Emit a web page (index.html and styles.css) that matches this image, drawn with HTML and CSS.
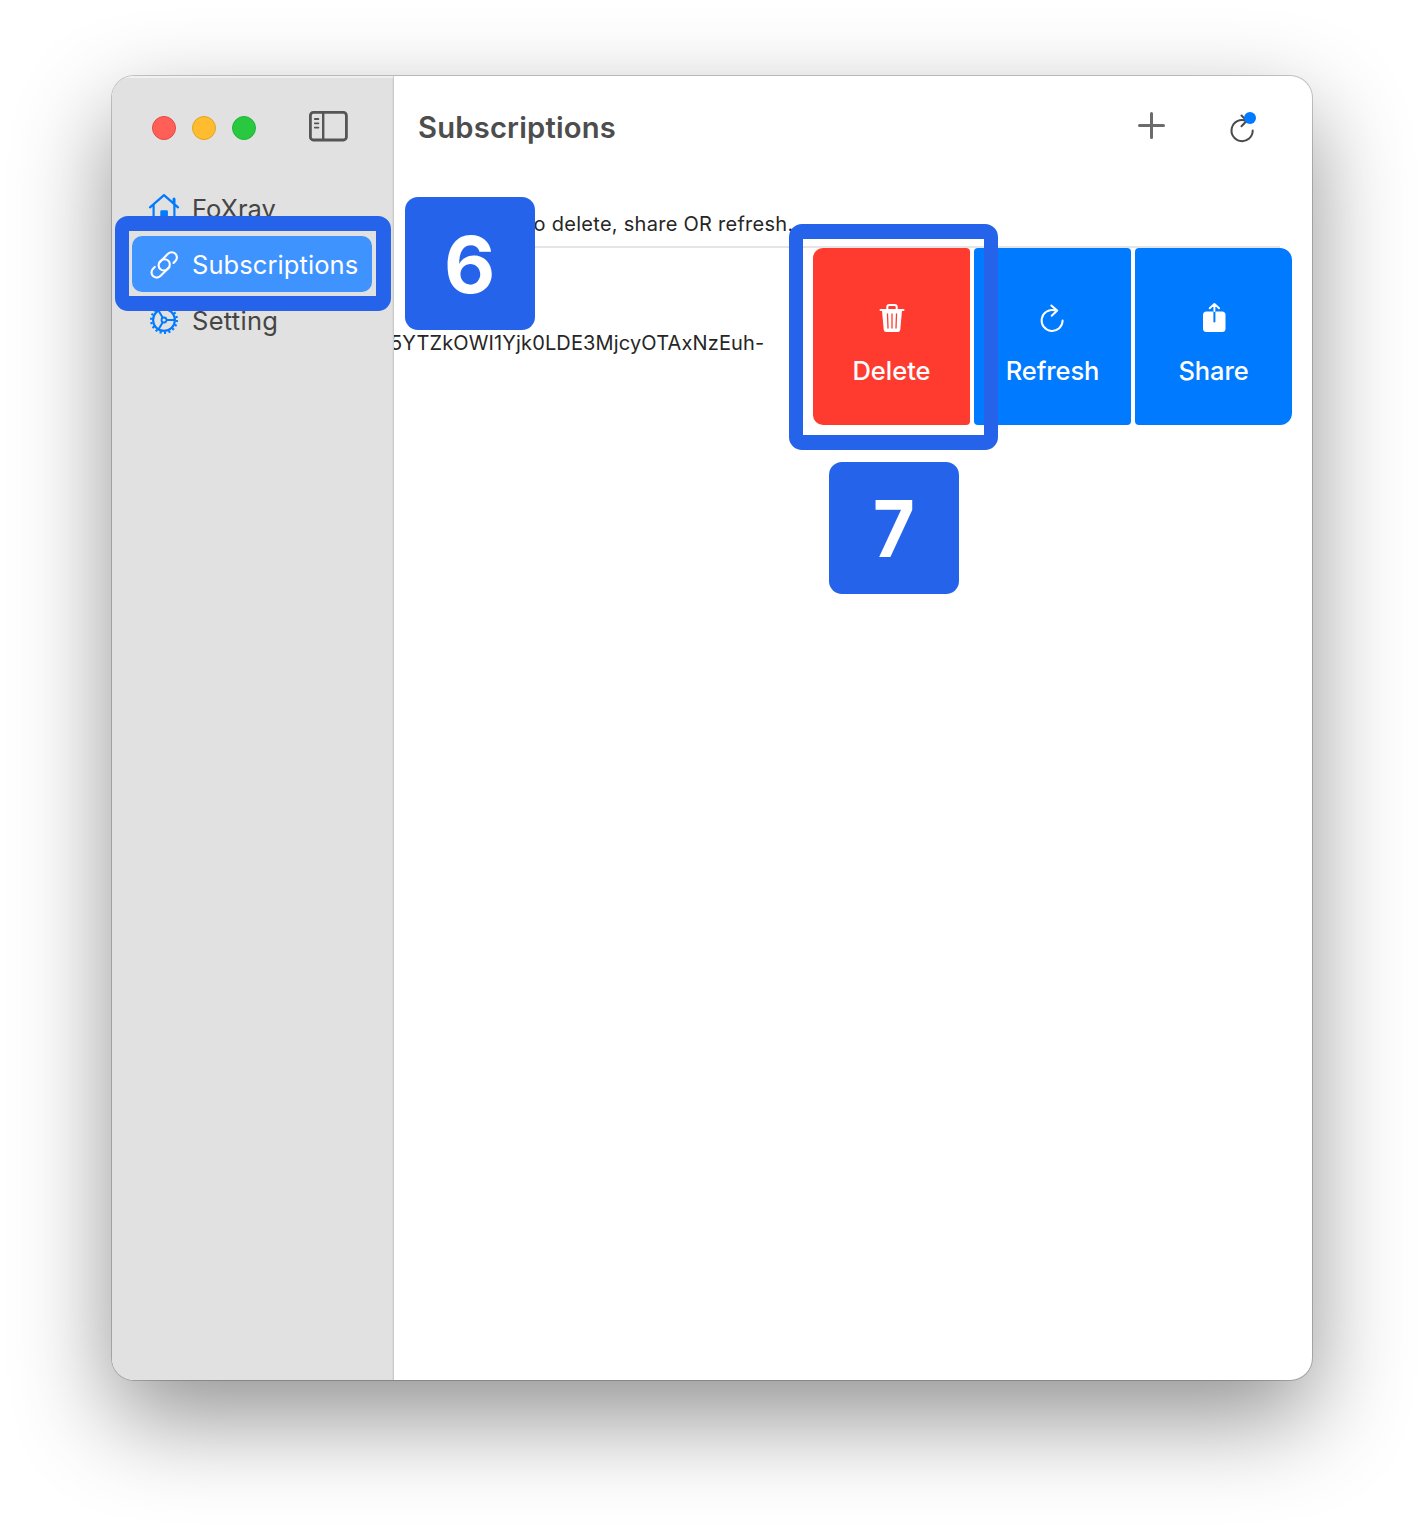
FILE: index.html
```html
<!DOCTYPE html>
<html lang="en">
<head>
<meta charset="utf-8">
<title>Subscriptions</title>
<link rel="stylesheet" href="styles.css">
</head>
<body>
<main class="stage">
  <div class="window">
    <aside class="sidebar">
      <div class="titlebar">
        <span class="light light-close"></span>
        <span class="light light-min"></span>
        <span class="light light-zoom"></span>
        <svg class="toggle" width="40" height="32" viewBox="0 0 40 32" fill="none" stroke="#555" stroke-width="2.8">
          <rect x="2.4" y="2.4" width="36" height="27.6" rx="3"/>
          <path d="M15.2 2.4V30" stroke-width="2.4"/>
          <path d="M6.8 9h3.6M6.8 13.3h3.6M6.8 17.6h3.6" stroke-width="1.8" stroke-linecap="round"/>
        </svg>
      </div>
      <nav class="nav">
        <a class="item">
          <svg class="icon" width="32" height="32" viewBox="0 0 32 32" fill="none" stroke="#007aff" stroke-width="2.2" stroke-linecap="round" stroke-linejoin="round">
            <path d="M2 15.4 16 3.2 30 15.4M5.6 13v15.4h20.8V13"/>
            <path d="M26 11V7" stroke-width="3"/>
            <path d="M13.4 27.5V19.4h5.4v8.1z" fill="#007aff"/>
          </svg>
          <span class="label label-home">FoXray</span>
        </a>
        <a class="item active">
          <svg class="icon" width="32" height="32" viewBox="0 0 32 32" fill="none" stroke="#fff" stroke-width="2.1" stroke-linecap="round">
            <g transform="translate(16.2 16.9) rotate(-45)">
              <path d="M8 5.200H10.600A5.200 5.200 0 0 0 10.600 -5.200H-.6A5.200 5.200 0 0 0 -.6 5.200H2"/>
              <path d="M-8 -5.200H-10.600A5.200 5.200 0 0 0 -10.600 5.200H.6A5.200 5.200 0 0 0 .6 -5.200H-2"/>
            </g>
          </svg>
          <span class="label label-subs">Subscriptions</span>
        </a>
        <a class="item">
          <svg class="icon" width="32" height="32" viewBox="0 0 32 32" fill="none" stroke="#007aff">
            <circle cx="16" cy="16" r="10.9" stroke-width="2.2"/>
            <circle cx="16" cy="16" r="12.9" stroke-width="2.2" stroke-dasharray="2.1 2.403"/>
            <circle cx="16" cy="16" r="2.5" stroke-width="1.8"/>
            <path d="M18.500 16H27M14.700 13.800 10.500 6.600M14.700 18.200 10.500 25.400" stroke-width="2"/>
          </svg>
          <span class="label label-set">Setting</span>
        </a>
      </nav>
    </aside>
    <section class="content">
      <header class="toolbar">
        <h1 class="title">Subscriptions</h1>
        <svg class="add" width="30" height="30" viewBox="0 0 30 30" fill="none" stroke="#6b6b6b" stroke-width="3" stroke-linecap="round">
          <path d="M2.500 14.500H26.500M14.500 2.500V26.500"/>
        </svg>
        <svg class="reload" width="32" height="34" viewBox="0 0 32 34" fill="none" stroke="#4a4a4a" stroke-width="2" stroke-linecap="round" stroke-linejoin="round">
          <path d="M24.700 20.500A10.600 10.600 0 1 1 18 10.700M13.500 5.500 18.800 10.700 13.500 16.300"/>
          <circle cx="22" cy="8" r="6" fill="#007aff" stroke="none"/>
        </svg>
      </header>
      <p class="note">to delete, share OR refresh.</p>
      <div class="row">
        <p class="url">5YTZkOWI1Yjk0LDE3MjcyOTAxNzEuh-</p>
        <div class="actions">
          <button class="action delete">
            <svg width="32" height="32" viewBox="0 0 32 32" fill="none">
              <path d="M6 8.500H27L25.300 27.500Q25.100 30 22.600 30H11.400Q8.900 30 8.700 27.500L7 8.500Z" fill="#fff"/>
              <path d="M5.500 8H28.500M12.300 8V5Q12.300 3 14.300 3H19.700Q21.700 3 21.700 5V8" stroke="#fff" stroke-width="2" stroke-linecap="round"/>
              <path d="M12.500 12 13 26M17 12V26M21.500 12 21 26" stroke="#ff3b30" stroke-width="1.3" stroke-linecap="round"/>
            </svg>
            <span class="text text-delete">Delete</span>
          </button>
          <button class="action refresh">
            <svg width="32" height="32" viewBox="0 0 32 32" fill="none" stroke="#fff" stroke-width="2" stroke-linecap="round" stroke-linejoin="round">
              <path d="M26.600 18.500A10.500 10.500 0 1 1 18.500 8.200M15.300 3.500 21.200 8.500 15.700 13.800"/>
            </svg>
            <span class="text text-refresh">Refresh</span>
          </button>
          <button class="action share">
            <svg width="32" height="32" viewBox="0 0 32 32" fill="none" stroke-linecap="round" stroke-linejoin="round">
              <rect x="5" y="9.5" width="22.5" height="20.5" rx="3.5" fill="#fff"/>
              <path d="M16.400 9.500V19.500" stroke="#007aff" stroke-width="2"/>
              <path d="M16.400 9V2.500M11.700 6.300 16.400 2 21.100 6.300" stroke="#fff" stroke-width="1.9"/>
            </svg>
            <span class="text text-share">Share</span>
          </button>
        </div>
      </div>
    </section>
  </div>
  <div class="frame frame-nav"></div>
  <div class="frame frame-delete"></div>
  <div class="step step-six"><span>6</span></div>
  <div class="step step-seven"><span>7</span></div>
</main>
</body>
</html>
```
FILE: styles.css
```css
* { box-sizing: border-box; }
body {
  margin: 0;
  background: #fff;
  font-family: Inter, "Liberation Sans", sans-serif;
}
.stage {
  position: relative;
  width: 1424px;
  height: 1528px;
  padding: 76px 112px;
  overflow: hidden;
}
.window {
  display: flex;
  width: 1200px;
  height: 1304px;
  border-radius: 22px;
  overflow: hidden;
  background: #fff;
  box-shadow: 0 0 0 1px rgba(0, 0, 0, .2), 0 38px 96px rgba(0, 0, 0, .43);
}
.sidebar {
  width: 282px;
  background: #e1e1e1;
  border-right: 1px solid #cacaca;
  box-shadow: inset 0 2px 0 #f0f0f0, inset -1px 0 0 #dadada;
}
.titlebar {
  display: flex;
  align-items: center;
  gap: 16px;
  height: 104px;
  padding-left: 40px;
}
.light {
  width: 24px;
  height: 24px;
  border-radius: 50%;
}
.light-close { background: #ff5f57; border: 1px solid #e24b41; }
.light-min { background: #febc2e; border: 1px solid #e1a325; }
.light-zoom { background: #28c840; border: 1px solid #24b538; }
.toggle { margin: -4px 0 0 36px; }
.nav { padding: 0 20px; }
.item {
  display: flex;
  align-items: center;
  height: 56px;
  padding-left: 16px;
  gap: 12px;
  width: 240px;
  border-radius: 10px;
  color: #454545;
}
.item.active { background: #3f93ff; color: #fff; }
.label {
  font-size: 25.5px;
  line-height: 32px;
  padding-top: 2px;
}
.label-subs { letter-spacing: .08px; }
.label-set { letter-spacing: .3px; }
.content {
  flex: 1;
  min-width: 0;
  overflow: hidden;
}
.toolbar {
  display: flex;
  align-items: center;
  height: 104px;
  padding: 0 52px 0 24px;
}
.title {
  margin: -1px 0 0;
  flex: 1;
  font-size: 29.2px;
  letter-spacing: .2px;
  font-weight: 600;
  color: #4d4d4d;
}
.add { margin: -4px 61px 0 0; }
.reload { margin-top: -2px; }
.note {
  margin: 0 32px 0 24px;
  height: 68px;
  padding: 32px 0 0 109px;
  border-bottom: 2px solid #e5e5e5;
  font-size: 20px;
  line-height: 24px;
  letter-spacing: .27px;
  color: #262626;
  white-space: nowrap;
}
.row {
  display: flex;
  justify-content: space-between;
  height: 177px;
  padding-right: 20px;
}
.url {
  display: flex;
  align-items: center;
  margin: 0 0 0 -4px;
  padding-top: 13px;
  font-size: 20px;
  letter-spacing: .14px;
  color: #262626;
  white-space: nowrap;
}
.actions { display: flex; gap: 4px; }
.action {
  display: flex;
  flex-direction: column;
  align-items: center;
  gap: 20px;
  width: 157px;
  padding: 54px 0 0;
  border: 0;
  border-radius: 4px;
  background: #007aff;
  color: #fff;
  font: 500 25.5px/34px Inter, "Liberation Sans", sans-serif;
}
.delete { background: #ff3b30; border-radius: 10px 4px 4px 10px; }
.delete svg, .refresh svg { margin-right: 2px; }
.text-refresh, .text-share { letter-spacing: -.08px; }
.share { border-radius: 4px 12px 12px 4px; }
.frame {
  position: absolute;
  border: solid #2563eb;
  border-radius: 13px;
}
.frame-nav { left: 115px; top: 216px; width: 276px; height: 95px; border-width: 15px 15px 15px 14px; }
.frame-delete { left: 789px; top: 224px; width: 209px; height: 226px; border-width: 15px 14px; }
.step {
  position: absolute;
  display: flex;
  align-items: center;
  justify-content: center;
  width: 129.5px;
  height: 132.5px;
  border-radius: 13px;
  background: #2563eb;
  color: #fff;
  font-size: 79px;
  font-weight: 700;
}
.step-six { left: 405px; top: 197px; }
.step-six span { padding-top: 2px; }
.step-seven { left: 829px; top: 461.5px; }
.step-seven span { transform: scaleX(.91); }
```
